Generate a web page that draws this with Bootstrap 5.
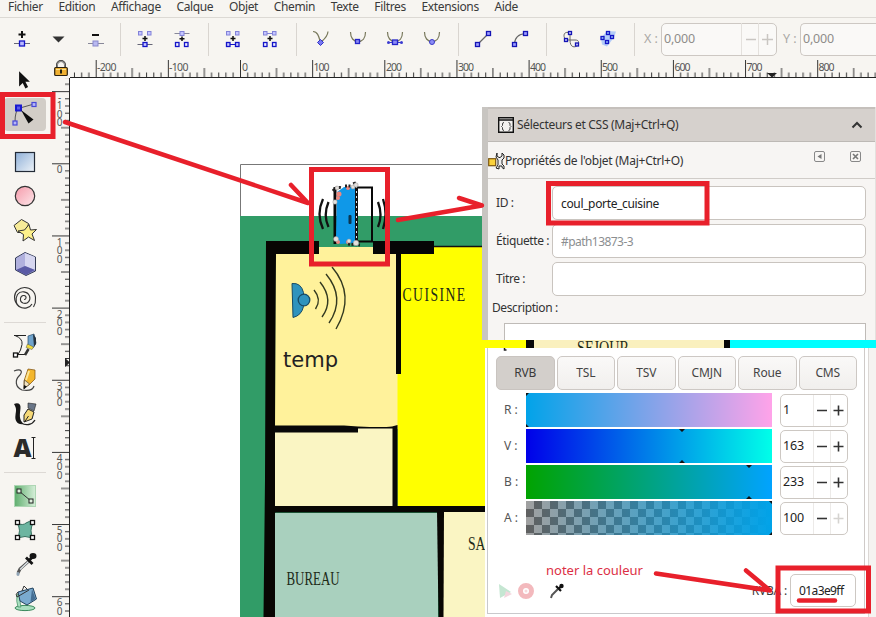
<!DOCTYPE html>
<html lang="fr">
<head>
<meta charset="utf-8">
<meta name="viewport" content="width=device-width, initial-scale=1">
<title>Inkscape - plan</title>
<link href="https://cdn.jsdelivr.net/npm/bootstrap@5.3.0/dist/css/bootstrap.min.css" rel="stylesheet">
<style>
  html, body { height: 617px; overflow: hidden; }
  body { width: 876px; font-family: "Noto Sans", "Open Sans", sans-serif; font-size: 12px; line-height: 16px; color: #3a3a3a; background: #f7f5f1; }
  svg { display: block; flex: none; }
  .menu-strip { height: 18px; border-bottom: 1px solid #dcd9d4; padding-left: 8px; }
  .menu-strip .nav-link { padding: 0; margin-right: 15.6px; color: #3a3a3a; font-size: 12px; line-height: 13px; letter-spacing: -.35px; white-space: nowrap; flex: none; }
  .tool-strip { height: 42px; padding-left: 3px; }
  .tbtn { width: 37px; height: 42px; flex: none; }
  .vsep { width: 1px; height: 33px; margin: 0 5.5px 0 7.5px; background: #d9d5d0; flex: none; }
  .vsep.first { margin-left: 6px; }
  .dimlab { color: #aaa8a5; font-size: 12.5px; width: 26px; padding-left: 9px; flex: none; white-space: nowrap; }
  .dimlab + .spin + .dimlab { width: 23px; padding-left: 6px; }
  .spin { height: 33px; border: 1px solid #cdc8c3; border-radius: 5px; }
  .spin-off { width: 116px; color: #8f8d8a; font-size: 12.5px; padding-left: 2px; background: #faf9f7; letter-spacing: -.2px; }
  .spin-cut { width: auto; border-right: 0; border-radius: 5px 0 0 5px; }
  .side { width: 52px; padding-top: 3px; flex: none; }
  .tool { height: 34px; width: 50px; }
  .tool.on > div { width: 42px; height: 33px; background: #d2cdc7; border-radius: 4px; }
  .hsep { height: 14px; width: 52px; }
  .hsep.line::after { content: ""; display: block; height: 1px; margin: 7px 6px 0 4px; background: #ddd9d5; }
  .stage { width: 824px; flex: none; }
  .dock { left: 482px; top: 107px; width: 394px; height: 233px; background: #f7f5f3; border-left: 6px solid #c8c5c1; border-right: 1px solid #e4e1de; color: #333; letter-spacing: -.25px; }
  .dock-head { height: 35px; background: #d6d1cd; border-top: 2px solid #c5c0bc; border-bottom: 1px solid #bdb9b5; padding: 0 12px 0 10px; letter-spacing: -.3px; }
  .dock-head span { padding-left: 2px; }
  .dock-sub { height: 37px; border-bottom: 1px solid #d0ccc8; padding: 2px 13px 0 0; }
  .dock-form { padding: 7px 9px 0 8px; }
  .dock-form .flab { width: 56px; font-size: 12px; white-space: nowrap; flex: none; letter-spacing: -.4px; }
  .dock-form .flab-wide { margin-left: -4px; }
  .field { height: 34px; margin-bottom: 4px; border: 1px solid #c9c4bf; border-radius: 5px; font-size: 12px; padding: 0 8px; color: #222; min-height: 0; box-shadow: none; letter-spacing: -.35px; }
  .field::placeholder { color: #8b8e90; opacity: 1; letter-spacing: -.55px; }
  .memo { margin: 7px 0 0 8px; height: 18px; border: 1px solid #bfbbb7; border-bottom: 0; background: #fff; }
  .mixer { left: 485px; top: 348px; width: 391px; height: 269px; background: #fff; }
  .mixer-body { width: 378px; height: 266px; border: 1px solid #c9c9cc; border-top: 0; border-right-color: #cfcac8; margin-left: 2px; padding: 8px 7px 0 8px; }
  .mixer-edge { border-left: 1px solid #dcd8d5; background: #f5f3f1; margin-left: 3px; }
  .mtabs { margin-bottom: 3px; }
  .mtab { width: 58.5px; height: 34px; border: 1px solid #cdc8c4; border-radius: 5px; background: linear-gradient(#faf9f8, #f1efed); color: #444; font-size: 12px; padding: 0; letter-spacing: -.15px; }
  .mtab.active { background: #d3cfcb; border-color: #c9c4c0; }
  .chan { height: 34px; margin-top: 2px; }
  .chan .clab { width: 30px; padding-left: 8px; color: #555; font-size: 12px; }
  .bar { width: 246px; height: 34px; }
  .spin-on { width: 68px; height: 33px; margin-left: 8px; color: #222; font-size: 12.5px; padding-left: 2px; background: #fff; letter-spacing: -.1px; }
  .foot { margin-top: 39px; }
  .rgba { width: 66px; height: 33px; border: 1px solid #cdc8c3; border-radius: 5px; color: #222; font-size: 12px; letter-spacing: -.6px; background: #fff; margin-right: 1px; }
  .rlab { letter-spacing: -.2px; margin-right: 3px; }
  .note-red { left: 546px; top: 562px; color: #dc2f45; font-size: 13px; white-space: nowrap; }
  .over { left: 0; top: 0; pointer-events: none; }
  .num { font: 10.5px "Noto Sans", "Open Sans", sans-serif; fill: #555; }
  .num-v { font-size: 10px; }
  .plan-t { font-family: "Liberation Serif", serif; font-size: 19px; fill: #1d2a17; }
</style>
<script src="https://cdn.jsdelivr.net/npm/bootstrap@5.3.0/dist/js/bootstrap.bundle.min.js"></script>
</head>
<body class="position-relative d-flex flex-column m-0">

<nav class="menu-strip nav flex-nowrap align-items-start flex-shrink-0">
  <a class="nav-link">Fichier</a><a class="nav-link">Edition</a><a class="nav-link">Affichage</a><a class="nav-link">Calque</a><a class="nav-link">Objet</a><a class="nav-link">Chemin</a><a class="nav-link">Texte</a><a class="nav-link">Filtres</a><a class="nav-link">Extensions</a><a class="nav-link">Aide</a>
</nav>

<!-- node tool controls; icons use a 26px box centred on 13,13 -->
<div class="tool-strip d-flex align-items-center flex-shrink-0">
  <div class="tbtn d-flex align-items-center justify-content-center"><svg width="26" height="26"><path d="M13 5v7M9.500 8.500h7" stroke="#111" stroke-width="2"/><path d="M5 17.500h16" stroke="#667"/><rect x="10.500" y="15" width="5" height="5" fill="#b9b9ff" stroke="#1414c8" stroke-width="1.300"/></svg></div>
  <div class="tbtn d-flex align-items-center justify-content-center"><svg width="26" height="26"><path d="M6.500 10.500h12l-6 6z" fill="#333"/></svg></div>
  <div class="tbtn d-flex align-items-center justify-content-center"><svg width="26" height="26"><path d="M9 9h7" stroke="#111" stroke-width="2"/><path d="M5 17.500h16" stroke="#889"/><rect x="10" y="15" width="5" height="5" fill="#b9b9f0" stroke="#8888cc"/></svg></div>
  <div class="vsep first"></div>
  <div class="tbtn d-flex align-items-center justify-content-center"><svg width="26" height="26"><g fill="#c5c5ff" stroke="#8282d8"><rect x="6.500" y="5.500" width="3.500" height="3.500"/><rect x="15.500" y="5.500" width="3.500" height="3.500"/></g><path d="M5.500 18.500h15" stroke="#667"/><rect x="11" y="16.500" width="4" height="4" fill="#c5c5ff" stroke="#1414c8" stroke-width="1.300"/><path d="M13 10v5M10.500 12.500h5" stroke="#111" stroke-width="1.500"/></svg></div>
  <div class="tbtn d-flex align-items-center justify-content-center"><svg width="26" height="26"><path d="M5.500 7.500h15" stroke="#889"/><rect x="11" y="5.500" width="4" height="4" fill="#c5c5ff" stroke="#8282d8"/><g fill="#eef" stroke="#1414c8" stroke-width="1.300"><rect x="6.500" y="16.500" width="3.500" height="4"/><rect x="15.500" y="16.500" width="3.500" height="4"/></g><path d="M13 10.500v4.500M10.500 12.800h5" stroke="#111" stroke-width="1.500"/></svg></div>
  <div class="vsep"></div>
  <div class="tbtn d-flex align-items-center justify-content-center"><svg width="26" height="26"><g fill="#c5c5ff" stroke="#8282d8"><rect x="6.500" y="5.500" width="3.500" height="3.500"/><rect x="15.500" y="5.500" width="3.500" height="3.500"/></g><path d="M10 18.500h6" stroke="#1414c8"/><g fill="#c5c5ff" stroke="#1414c8" stroke-width="1.300"><rect x="6.500" y="16.500" width="3.500" height="4"/><rect x="15.500" y="16.500" width="3.500" height="4"/></g><path d="M13 10v5M10.500 12.500h5" stroke="#111" stroke-width="1.500"/></svg></div>
  <div class="tbtn d-flex align-items-center justify-content-center"><svg width="26" height="26"><path d="M10 7.500h6" stroke="#8282d8"/><g fill="#c5c5ff" stroke="#8282d8"><rect x="6.500" y="5.500" width="3.500" height="3.500"/><rect x="15.500" y="5.500" width="3.500" height="3.500"/></g><g fill="#eef" stroke="#1414c8" stroke-width="1.300"><rect x="6.500" y="16.500" width="3.500" height="4"/><rect x="15.500" y="16.500" width="3.500" height="4"/></g><path d="M13 10v5M10.500 12.500h5" stroke="#111" stroke-width="1.500"/></svg></div>
  <div class="vsep"></div>
  <div class="tbtn d-flex align-items-center justify-content-center"><svg width="26" height="26"><path d="M5 5.500c5 0 6 6 7.500 11 2-2 7-5 7.500-11" fill="none" stroke="#77775a" stroke-width="1.200"/><path d="M12.500 13.500l3 3-3 3-3-3z" fill="#7878f0" stroke="#3030c8"/></svg></div>
  <div class="tbtn d-flex align-items-center justify-content-center"><svg width="26" height="26"><path d="M5.500 6c0 6 3 9.500 7.500 9.500s7.500-3.500 7.500-9.500" fill="none" stroke="#77775a" stroke-width="1.200"/><rect x="10.500" y="13.500" width="4" height="4" fill="#8c8cf5" stroke="#2525c8" stroke-width="1.300"/></svg></div>
  <div class="tbtn d-flex align-items-center justify-content-center"><svg width="26" height="26"><path d="M5.500 6c0 6 3 9.500 7.500 9.500s7.500-3.500 7.500-9.500" fill="none" stroke="#77775a" stroke-width="1.200"/><path d="M6 16.500h14" stroke="#3b3bd0"/><circle cx="6.500" cy="16.500" r="1.500" fill="#3b3bd0"/><circle cx="19.500" cy="16.500" r="1.500" fill="#3b3bd0"/><rect x="10.500" y="14" width="5" height="4.500" fill="#8c8cf5" stroke="#2525c8" stroke-width="1.300"/></svg></div>
  <div class="tbtn d-flex align-items-center justify-content-center"><svg width="26" height="26"><path d="M5.500 6c0 6 3 9.500 7.500 9.500s7.500-3.500 7.500-9.500" fill="none" stroke="#77775a" stroke-width="1.200"/><circle cx="13" cy="16" r="2.500" fill="#8c8cf5" stroke="#3b3bc8"/></svg></div>
  <div class="vsep"></div>
  <div class="tbtn d-flex align-items-center justify-content-center"><svg width="26" height="26"><path d="M7.500 18.500l11-11" stroke="#666" stroke-width="1.200"/><g fill="#9c9cff" stroke="#1414b4" stroke-width="1.300"><rect x="5.500" y="16.500" width="4" height="4"/><rect x="16.500" y="5.500" width="4" height="4"/></g></svg></div>
  <div class="tbtn d-flex align-items-center justify-content-center"><svg width="26" height="26"><path d="M7.500 18.500q0-10 11-11" stroke="#666" stroke-width="1.200" fill="none"/><g fill="#9c9cff" stroke="#1414b4" stroke-width="1.300"><rect x="5.500" y="16.500" width="4" height="4"/><rect x="16.500" y="5.500" width="4" height="4"/></g></svg></div>
  <div class="vsep"></div>
  <div class="tbtn d-flex align-items-center justify-content-center"><svg width="26" height="26"><path d="M12 7c-5-2-7 1-5.500 5M12 7v7c0 8 5 8 8 5M8 14h9c4 0 4 2 3 5" stroke="#666" fill="none"/><g fill="#c9c9ff" stroke="#1414b4" stroke-width="1.300"><rect x="10.500" y="5.500" width="3" height="3"/><rect x="6.500" y="12.500" width="3" height="3"/><rect x="17.500" y="17" width="3" height="3"/></g></svg></div>
  <div class="tbtn d-flex align-items-center justify-content-center"><svg width="26" height="26"><path d="M6 12l6-7 9 .500-2 6-7 9-5-2z" fill="#b4ccf8"/><g fill="#8fb8f5" stroke="#1414c4" stroke-width="1.300"><rect x="11.500" y="5.500" width="3" height="3"/><rect x="6" y="10.500" width="3" height="3"/><rect x="15.500" y="9.500" width="3" height="3"/><rect x="10.500" y="14.500" width="3" height="3"/></g></svg></div>
  <div class="vsep me-0"></div>
  <span class="dimlab">X :</span>
  <div class="spin spin-off d-flex align-items-center flex-shrink-0"><span class="flex-grow-1">0,000</span><svg width="35" height="32"><path d="M.500 0v32M17.500 0v32" stroke="#e4e1dd"/><path d="M5 16.500h10M21 16.500h11M26.500 11v11" stroke="#c9c6c2" stroke-width="1.500"/></svg></div>
  <span class="dimlab">Y :</span>
  <div class="spin spin-off spin-cut d-flex align-items-center flex-grow-1">0,000</div>
</div>

<div class="d-flex flex-grow-1">
  <!-- toolbox -->
  <aside class="side d-flex flex-column">
    <div class="tool d-flex align-items-center justify-content-center"><svg width="30" height="30"><path d="M9 7v17l4-4 3 6 3-1.500-3-6h5z" fill="#111" transform="translate(1 0) scale(.9)"/></svg></div>
    <div class="tool on d-flex align-items-center justify-content-center"><div><svg width="42" height="33"><path d="M11 24q0-11 4-14M16 10l14-4" stroke="#555" fill="none"/><rect x="12" y="7.500" width="5" height="5" fill="#5a5ae8" stroke="#1818d0" stroke-width="2"/><rect x="28" y="4.500" width="4" height="4" fill="#b7b7f5" stroke="#4747d8" stroke-width="1.200"/><rect x="9" y="23" width="4" height="4" fill="#b7b7f5" stroke="#4747d8" stroke-width="1.200"/><path d="M17 12l12.500 9.500-5 4z" fill="#0c0c0c"/></svg></div></div>
    <div class="hsep"></div>
    <div class="tool d-flex align-items-center justify-content-center"><svg width="30" height="30"><defs><linearGradient id="gb" x2="1" y2="1"><stop stop-color="#8fb0d8"/><stop offset="1" stop-color="#eef3f8"/></linearGradient><linearGradient id="gp" x2="1" y2="1"><stop stop-color="#f59aaa"/><stop offset="1" stop-color="#fde7ea"/></linearGradient></defs><rect x="5.500" y="5.500" width="19" height="19" fill="url(#gb)" stroke="#222a36" stroke-width="1.200"/></svg></div>
    <div class="tool d-flex align-items-center justify-content-center"><svg width="30" height="30"><circle cx="15" cy="15" r="9.700" fill="url(#gp)" stroke="#333" stroke-width="1.200"/></svg></div>
    <div class="tool d-flex align-items-center justify-content-center"><svg width="30" height="30"><path d="M11.500 4.500l7 4-2 9H7.500L4 10.500z" fill="#f7eb98" stroke="#333"/><path d="M19 9.500l1.500 5.500 6-.500-4.500 4.500 2.500 6.500-6-3.500-5.500 4 .500-6.500-5.500-3.500 6.500-1z" fill="#fdf08a" stroke="#333"/></svg></div>
    <div class="tool d-flex align-items-center justify-content-center"><svg width="30" height="30"><path d="M15 3.500L25.500 8v14L16 26.500 5.500 21V9z" fill="#a5a5dc" stroke="#333b55"/><path d="M6 9.500L15 4v13l-9 4z" fill="#b0b0dd"/><path d="M15 4l10 4v13l-10-4z" fill="#d6d6f0"/><path d="M6 21l9-4 10 4-9 5z" fill="#5a5aa5"/></svg></div>
    <div class="tool d-flex align-items-center justify-content-center"><svg width="30" height="30"><path d="M14 16.500c2.500 0 3-3.500 0-4-4-.500-5 6-1 7.500 5 1.500 8-3 6.500-7-2-5-9-5.500-12-1.500-3 5-1.500 11 4 13M25.500 15c0-6.500-5-10.500-11-10.500-5 0-10 4-10 9.500 0 4 1.500 7 4.500 9.500 5 3 11 1.500 13-2.500M25.500 15q.500 5-2 9" fill="none" stroke="#333" stroke-width="1.100"/></svg></div>
    <div class="hsep line"></div>
    <div class="tool d-flex align-items-center justify-content-center"><svg width="30" height="30"><path d="M4 4.500h12M5 4.500q8 3 7 9t-4 10h7" fill="none" stroke="#222"/><path d="M18 5l6-2 2 9-3 5-5-2z" fill="#6fa3cc" stroke="#274a6a" stroke-width=".700"/><path d="M23 3l3 4v6l-2 3z" fill="#26323e"/><path d="M17.500 13l6 3-1.500 2.500-6-2z" fill="#f0dc3c" stroke="#555" stroke-width=".500"/><path d="M18.500 18l-3.500 6" stroke="#333" stroke-width="2.500"/><rect x="3.500" y="22" width="4" height="4" fill="#fff" stroke="#111" stroke-width="1.300"/></svg></div>
    <div class="tool d-flex align-items-center justify-content-center"><svg width="30" height="30"><path d="M4 6c8-3 9 1 5 5s-4 11 3 14c6 1 11 0 12-4" fill="none" stroke="#444" stroke-width="1.200"/><path d="M18 4l7 1v9l-6 6-5 3 0-7z" fill="#f3b62c" stroke="#7a4e10" stroke-width=".700"/><path d="M14.500 15l5 4-5.500 5z" fill="#f3e3c0" stroke="#333" stroke-width=".600"/><path d="M19 6l-3 9" stroke="#fde79a" stroke-width="2"/><path d="M14 20l3 1.500-3.500 3z" fill="#111"/></svg></div>
    <div class="tool d-flex align-items-center justify-content-center"><svg width="30" height="30"><path d="M4 5c4-2 7 0 6.500 4-.500 6-2 11 3 16-6 1-9-3-8-9 .500-4 1.500-6-1.500-11z" fill="#151515"/><path d="M11 24c5 3 11 2 14-3" fill="none" stroke="#222" stroke-width="1.300"/><path d="M18 4l8 1-2 7-6-3z" fill="#6a7688" stroke="#222" stroke-width=".600"/><path d="M18 10l6 3-2 7-8 3 0-7z" fill="#f6d978" stroke="#222"/><path d="M14.500 23l4-6" stroke="#222"/></svg></div>
    <div class="tool d-flex align-items-center justify-content-center"><svg width="30" height="30"><text x="3.500" y="23.500" font-family="Open Sans, sans-serif" font-weight="800" font-size="25" fill="#2b2b2b" textLength="18" lengthAdjust="spacingAndGlyphs">A</text><path d="M21.500 4.500h4M21.500 25.500h4M23.500 5v20" stroke="#222"/></svg></div>
    <div class="hsep line"></div>
    <div class="tool d-flex align-items-center justify-content-center"><svg width="30" height="30"><defs><linearGradient id="gg"><stop stop-color="#5fae6e"/><stop offset="1" stop-color="#d6efd9"/></linearGradient></defs><rect x="4.500" y="4.500" width="21" height="21" fill="url(#gg)" stroke="#aed6b4"/><path d="M9 10l12 10" stroke="#333"/><rect x="7" y="8" width="4" height="4" fill="#dff0df" stroke="#222"/><rect x="19" y="18" width="4" height="4" fill="#dff0df" stroke="#222"/></svg></div>
    <div class="tool d-flex align-items-center justify-content-center"><svg width="30" height="30"><path d="M7 8q6 3 9 0t7 0q-4 8 0 15-8-3-16 0 5-7 0-15z" fill="#6cb5a0" stroke="#35705f"/><g fill="#fff" stroke="#111" stroke-width="1.300"><rect x="5.500" y="5.500" width="4" height="4"/><rect x="20.500" y="5.500" width="4" height="4"/><rect x="5.500" y="20.500" width="4" height="4"/><rect x="20.500" y="20.500" width="4" height="4"/></g></svg></div>
    <div class="tool d-flex align-items-center justify-content-center"><svg width="30" height="30"><path d="M19 12l-9 8-2 4" stroke="#555" stroke-width="3" fill="none"/><path d="M18.500 12.500l-8.500 8" stroke="#dfe6ea" stroke-width="1.300"/><path d="M16 8.500l6.500 6.500M18.500 12l5-5" stroke="#151515" stroke-width="2.800"/><ellipse cx="23" cy="7" rx="3.500" ry="3" fill="#151515"/><ellipse cx="8" cy="25" rx="1.600" ry="2" fill="#8fa3b5"/></svg></div>
    <div class="tool d-flex align-items-center justify-content-center"><svg width="30" height="30"><ellipse cx="15" cy="25" rx="10" ry="2.600" fill="#a9dfc0" stroke="#3a8a5c"/><path d="M7 11q-1 8 1 13h3q-2-6 0-11z" fill="#a9dfc0" stroke="#3a8a5c" stroke-width=".700"/><path d="M8 9l15-4 3.500 11-9.500 6-7-4z" fill="#7aaacf" stroke="#23435f"/><path d="M8 9q-3 2-1 5l12-7M12 8l2-5 3 3" fill="none" stroke="#333"/><path d="M22 6l3.500 10-5 3z" fill="#466f94"/></svg></div>
  </aside>

  <div class="stage d-flex flex-column">
    <div class="d-flex">
      <svg width="18" height="18" viewBox="52 60 18 18"><path d="M57 68v-3a4 4 0 0 1 8 0v3" fill="none" stroke="#333" stroke-width="2"/><path d="M57.200 68v-3a3.800 3.800 0 0 1 7.600 0v3" fill="none" stroke="#ccc" stroke-width=".700"/><rect x="54.700" y="67.500" width="12.600" height="8" rx="1" fill="#f0b132" stroke="#2b2110" stroke-width="1.200"/><path d="M56 69.500h10" stroke="#fbe08e"/><path d="M61 69.500v4" stroke="#221" stroke-width="2"/></svg>
      <svg width="806" height="18" viewBox="70 60 806 18">
        <defs><pattern id="ph" x="240" y="60" width="72.150" height="18" patternUnits="userSpaceOnUse"><path d="M.500 0v18M36.500 8v10M7.700 12.500v6M14.900 12.500v6M22.100 12.500v6M29.300 12.500v6M43.700 12.500v6M50.900 12.500v6M58.100 12.500v6M65.300 12.500v6" stroke="#333"/></pattern></defs>
        <rect x="70" y="60" width="806" height="18" fill="url(#ph)"/><path d="M70 77.500h806" stroke="#222"/><path d="M767 73h10l-5 4.500z" fill="#222"/>
        <g class="num"><text x="97" y="70.500" textLength="19.500">-200</text><text x="169" y="70.500" textLength="19.500">-100</text><text x="242" y="70.500">0</text><text x="313.500" y="70.500" textLength="16">100</text><text x="386" y="70.500" textLength="16">200</text><text x="458" y="70.500" textLength="16">300</text><text x="530" y="70.500" textLength="16">400</text><text x="602" y="70.500" textLength="16">500</text><text x="674.500" y="70.500" textLength="16">600</text><text x="746.500" y="70.500" textLength="16">700</text><text x="818.500" y="70.500" textLength="16">800</text></g>
      </svg>
    </div>
    <div class="d-flex">
      <svg width="18" height="539" viewBox="52 78 18 539">
        <defs><pattern id="pv" x="52" y="163.300" width="18" height="72.150" patternUnits="userSpaceOnUse"><path d="M0 .500h18M9 36.500h9M13 7.700h5M13 14.900h5M13 22.100h5M13 29.300h5M13 43.700h5M13 50.900h5M13 58.100h5M13 65.300h5" stroke="#333"/></pattern></defs>
        <rect x="52" y="78" width="18" height="539" fill="url(#pv)"/><path d="M69.500 78v539" stroke="#222"/><path d="M65 358l5 4.500-5 4.500z" fill="#222"/>
        <g class="num num-v" text-anchor="middle"><text><tspan x="59.500" y="101">-</tspan><tspan x="59.500" y="109">1</tspan><tspan x="59.500" y="117.500">0</tspan><tspan x="59.500" y="126">0</tspan></text><text x="59.500" y="172.500">0</text><text><tspan x="59.500" y="245.500">1</tspan><tspan x="59.500" y="254">0</tspan><tspan x="59.500" y="262.500">0</tspan></text><text><tspan x="59.500" y="318">2</tspan><tspan x="59.500" y="326">0</tspan><tspan x="59.500" y="334.500">0</tspan></text><text><tspan x="59.500" y="389.500">3</tspan><tspan x="59.500" y="398">0</tspan><tspan x="59.500" y="406">0</tspan></text><text><tspan x="59.500" y="462">4</tspan><tspan x="59.500" y="470">0</tspan><tspan x="59.500" y="478.500">0</tspan></text><text><tspan x="59.500" y="534">5</tspan><tspan x="59.500" y="542">0</tspan><tspan x="59.500" y="550.500">0</tspan></text><text><tspan x="59.500" y="606">6</tspan><tspan x="59.500" y="614.500">0</tspan></text></g>
      </svg>
      <!-- floor plan -->
      <svg width="806" height="539" viewBox="70 78 806 539">
        <rect x="70" y="78" width="806" height="539" fill="#fff"/>
        <path d="M240.500 617V164.500H490" fill="none" stroke="#777"/>
        <rect x="240" y="216" width="250" height="401" fill="#319c67"/>
        <path d="M266 241h53v13h-43L275 617H263.500L265 480z" fill="#080603"/>
        <path d="M276 254h43v-7h55v7h24v175H275z" fill="#fff29b"/>
        <rect x="397.500" y="247" width="92" height="260" fill="#ff0"/>
        <path d="M434 246.500h56" stroke="#111" stroke-width="1.500"/>
        <path d="M373 241h61v13h-33v120h-5V254h-23z" fill="#060606"/>
        <rect x="275" y="427" width="118" height="80" fill="#faf5c3"/>
        <path d="M274 425.500h70l14 1q25 1 34 0l5.500-1.500v82h-5V428.500H358v4h-84z" fill="#080808"/>
        <rect x="274" y="506" width="213" height="6.500" fill="#080603"/>
        <rect x="275" y="513" width="163" height="104" fill="#a9d0be"/>
        <rect x="443" y="512" width="47" height="105" fill="#faf5c3"/>
        <path d="M437 511h7l-.500 106h-5z" fill="#080603"/>
        <g class="plan-t">
          <text transform="translate(402.500 300.500) scale(.72 1)" textLength="87">CUISINE</text>
          <text x="286.500" y="584.500" textLength="53" lengthAdjust="spacingAndGlyphs">BUREAU</text>
          <text x="468" y="549.500" textLength="17.500" lengthAdjust="spacingAndGlyphs">SA</text>
        </g>
        <text x="283" y="367" font-family="DejaVu Sans, sans-serif" font-size="21" fill="#222" textLength="55" lengthAdjust="spacingAndGlyphs">temp</text>
        <!-- sensor -->
        <path d="M292 283.500q9-1 11.500 9v14q-2 9-10.500 11z" fill="#2f93bd" stroke="#174b66"/>
        <circle cx="304" cy="300" r="5.800" fill="#2f93bd" stroke="#174b66" stroke-width="1.300"/>
        <path d="M314 290q8 9.500 1.500 19M320 282q14.500 18 2 35M326 274q20 24 3 49M332 267q24 28 4 62" fill="none" stroke="#333a20" stroke-width="1.400"/>
        <!-- door -->
        <path d="M357 187.500h15v54h-15" fill="none" stroke="#080808" stroke-width="2"/>
        <path d="M335 187v57" stroke="#080808" stroke-width="3"/>
        <path d="M337 192l7-5h12v56l-16 1-4-6z" fill="#0f98e8"/>
        <path d="M356.500 186v58" stroke="#111" stroke-width="3"/><path d="M356.500 186v58" stroke="#d9e6f5" stroke-dasharray="2 3"/>
        <rect x="348.500" y="215" width="3" height="9" rx="1" fill="#0b3550"/>
        <g fill="#f0877d"><circle cx="339" cy="194" r="2.500"/><circle cx="348" cy="188" r="2"/><circle cx="338" cy="198" r="2"/><circle cx="348" cy="242" r="2"/><circle cx="338" cy="242" r="2"/></g>
        <g fill="none" stroke="#222" stroke-width="3" stroke-dasharray="2 1.500"><path d="M333 191q4-5 9-3M345 186h7M354 182q2 5 5 4M348 244l12 1"/></g>
        <g fill="#e4e0dc" stroke="#999" stroke-width=".500"><circle cx="337" cy="188" r="2"/><circle cx="353" cy="187" r="2"/><circle cx="356" cy="185" r="2.200"/><circle cx="335" cy="202" r="2.200"/><circle cx="336" cy="239" r="2.500"/><circle cx="349" cy="241" r="2"/><circle cx="356" cy="243" r="2.700"/></g>
        <path d="M323 199q-7 15 0 30M328.500 202q-5.500 13 0 25M378 202q5 13 0 25M383 199q5 15 0 30" fill="none" stroke="#111" stroke-width="2.300"/>
      </svg>
    </div>
  </div>
</div>

<!-- object properties window lying over the canvas -->
<section class="dock position-absolute overflow-hidden">
  <div class="dock-head d-flex align-items-center">
    <svg width="17" height="17"><path d="M.700.700h14.600v14.600H.700zM.700 3h15" fill="#f4f2f0" stroke="#111" stroke-width="1.400"/><path d="M6 5.500q-1.500 0-1.500 1.500v1.500l-1 1 1 1V12q0 1.500 1.500 1.500M10.500 5.500Q12 5.500 12 7v1.500l1 1-1 1V12q0 1.500-1.500 1.500" fill="none" stroke="#444"/></svg>
    <span class="flex-grow-1">Sélecteurs et CSS (Maj+Ctrl+Q)</span>
    <svg width="12" height="12"><path d="M1.500 8.500L6 4l4.500 4.500" fill="none" stroke="#333" stroke-width="2"/></svg>
  </div>
  <div class="dock-sub d-flex align-items-center">
    <svg width="17" height="18"><path d="M9 1v3l2 1.500h1L14 4V1l2 2v3l-2 2v4l2 2v3l-2-1.500v-1.500h-3V17l-3-1 2-3V8L8 5z" fill="#eee" stroke="#222"/><rect x=".700" y="6.700" width="7" height="7" fill="#fbd23c" stroke="#7a5510" stroke-width="1.200"/></svg>
    <span class="flex-grow-1">Propriétés de l'objet (Maj+Ctrl+O)</span>
    <svg width="48" height="12" class="mb-2"><g fill="none" stroke="#888"><rect x=".500" y=".500" width="10" height="10" rx="1.500"/><rect x="36.500" y=".500" width="10" height="10" rx="1.500"/></g><path d="M7.500 3v5l-4-2.500z" fill="#777"/><path d="M39 3l5 5M44 3l-5 5" stroke="#777" stroke-width="1.600"/></svg>
  </div>
  <div class="dock-form">
    <div class="d-flex align-items-center"><label class="flab mb-1">ID :</label><input class="form-control field" value="coul_porte_cuisine"></div>
    <div class="d-flex align-items-center"><label class="flab mb-1">Étiquette :</label><input class="form-control field" placeholder="#path13873-3"></div>
    <div class="d-flex align-items-center"><label class="flab mb-1">Titre :</label><input class="form-control field"></div>
    <div class="flab flab-wide">Description :</div>
    <div class="memo"></div>
  </div>
</section>

<!-- colour mixer window -->
<section class="mixer position-absolute d-flex">
  <div class="mixer-body flex-shrink-0">
    <div class="mtabs d-flex justify-content-between">
      <button class="btn mtab active">RVB</button><button class="btn mtab">TSL</button><button class="btn mtab">TSV</button><button class="btn mtab">CMJN</button><button class="btn mtab">Roue</button><button class="btn mtab">CMS</button>
    </div>
    <div class="chan d-flex align-items-center mt-0"><span class="clab">R :</span><svg class="bar"><defs><linearGradient id="cr"><stop stop-color="#01a3e9"/><stop offset="1" stop-color="#ffa3e9"/></linearGradient><linearGradient id="cg"><stop stop-color="#0000e9"/><stop offset="1" stop-color="#00ffe9"/></linearGradient><linearGradient id="cb"><stop stop-color="#01a300"/><stop offset="1" stop-color="#01a3ff"/></linearGradient><linearGradient id="ca"><stop stop-color="#01a3e9" stop-opacity="0"/><stop offset="1" stop-color="#01a3e9"/></linearGradient><pattern id="ck" width="16" height="16" patternUnits="userSpaceOnUse"><rect width="16" height="16" fill="#a0a0a0"/><path d="M0 0h8v8H0zM8 8h8v8H8z" fill="#606060" transform="translate(8 0)"/><path d="M0 8h8v8H0z" fill="#606060"/></pattern></defs><rect width="246" height="34" fill="url(#cr)"/><path d="M0 0h3l-3 3zM0 34h3l-3-3z" fill="#111"/></svg>
      <div class="spin spin-on d-flex align-items-center"><span class="flex-grow-1">1</span><svg width="34" height="31"><path d="M.500 0v31M17.500 0v31" stroke="#eceae8"/><path d="M4 15.500h10M20.500 15.500h10M25.500 10.500v10" stroke="#333" stroke-width="1.600"/></svg></div></div>
    <div class="chan d-flex align-items-center"><span class="clab">V :</span><svg class="bar"><rect width="246" height="34" fill="url(#cg)"/><path d="M153 0h6l-3 3zM153 34h6l-3-3z" fill="#111"/></svg>
      <div class="spin spin-on d-flex align-items-center"><span class="flex-grow-1">163</span><svg width="34" height="31"><path d="M.500 0v31M17.500 0v31" stroke="#eceae8"/><path d="M4 15.500h10M20.500 15.500h10M25.500 10.500v10" stroke="#333" stroke-width="1.600"/></svg></div></div>
    <div class="chan d-flex align-items-center"><span class="clab">B :</span><svg class="bar"><rect width="246" height="34" fill="url(#cb)"/><path d="M220 0h6l-3 3zM220 34h6l-3-3z" fill="#111"/></svg>
      <div class="spin spin-on d-flex align-items-center"><span class="flex-grow-1">233</span><svg width="34" height="31"><path d="M.500 0v31M17.500 0v31" stroke="#eceae8"/><path d="M4 15.500h10M20.500 15.500h10M25.500 10.500v10" stroke="#333" stroke-width="1.600"/></svg></div></div>
    <div class="chan d-flex align-items-center"><span class="clab">A :</span><svg class="bar"><rect width="246" height="34" fill="url(#ck)"/><rect width="246" height="34" fill="url(#ca)"/><path d="M246 0h-3l3 3zM246 34h-3l3-3z" fill="#111"/></svg>
      <div class="spin spin-on d-flex align-items-center"><span class="flex-grow-1">100</span><svg width="34" height="31"><path d="M.500 0v31M17.500 0v31" stroke="#eceae8"/><path d="M4 15.500h10" stroke="#333" stroke-width="1.600"/><path d="M20.500 15.500h10M25.500 10.500v10" stroke="#d5d3d0" stroke-width="1.600"/></svg></div></div>
    <div class="foot d-flex align-items-center justify-content-between">
      <svg width="72" height="18"><path d="M3 2l12 8-11 6z" fill="#c5e6d2"/><path d="M10 9l6 3-8 4z" fill="#f3d6de"/><circle cx="30" cy="9" r="5.500" fill="none" stroke="#f3b9bd" stroke-width="5"/><circle cx="30" cy="9" r="1.500" fill="#f7d9db"/><path d="M55 16l1-3 6-6" stroke="#555" stroke-width="2" fill="none"/><path d="M60 4l5 5M62.500 7l3-3" stroke="#111" stroke-width="2.200"/><circle cx="65.500" cy="4" r="2.200" fill="#111"/></svg>
      <div class="d-flex align-items-center"><span class="rlab">RVBA :</span><div class="rgba d-flex align-items-center ps-2">01a3e9ff</div></div>
    </div>
  </div>
  <div class="mixer-edge flex-grow-1"></div>
</section>

<div class="note-red position-absolute">noter la couleur</div>

<!-- plan strip between the windows, then the hand-drawn marks -->
<svg class="over position-absolute" width="876" height="617">
  <path d="M480 340h46v8h-41v157h-5z" fill="#ff0"/>
  <rect x="526" y="340" width="8" height="8" fill="#080808"/><rect x="534" y="340" width="190" height="8" fill="#faf0be"/><rect x="724" y="340" width="6" height="8" fill="#080808"/><rect x="730" y="340" width="146" height="8" fill="#0ff"/>
  <path d="M504.500 348v2h2" fill="none" stroke="#222" stroke-width="1.500"/>
  <clipPath id="sj"><rect x="534" y="340" width="190" height="8"/></clipPath>
  <g clip-path="url(#sj)"><text class="plan-t" x="577" y="353.500" textLength="52" lengthAdjust="spacingAndGlyphs">SEJOUR</text></g>
  <g fill="none" stroke="#e8202b" stroke-width="5">
    <rect x="2.500" y="94.500" width="50.500" height="42"/>
    <rect x="311.500" y="169.500" width="76" height="94.500"/>
    <rect x="548.500" y="183.500" width="158.500" height="39.500"/>
    <rect x="778" y="568" width="90.500" height="43"/>
    <g stroke-width="4.500" stroke-linecap="round" stroke-linejoin="round"><path d="M65 122L308 203L291 185"/><path d="M398 220L482 205.500L459 198"/><path d="M656 573.500L770 590.500L746 570.500"/><path d="M799 600.500H835"/></g>
  </g>
</svg>
</body>
</html>
